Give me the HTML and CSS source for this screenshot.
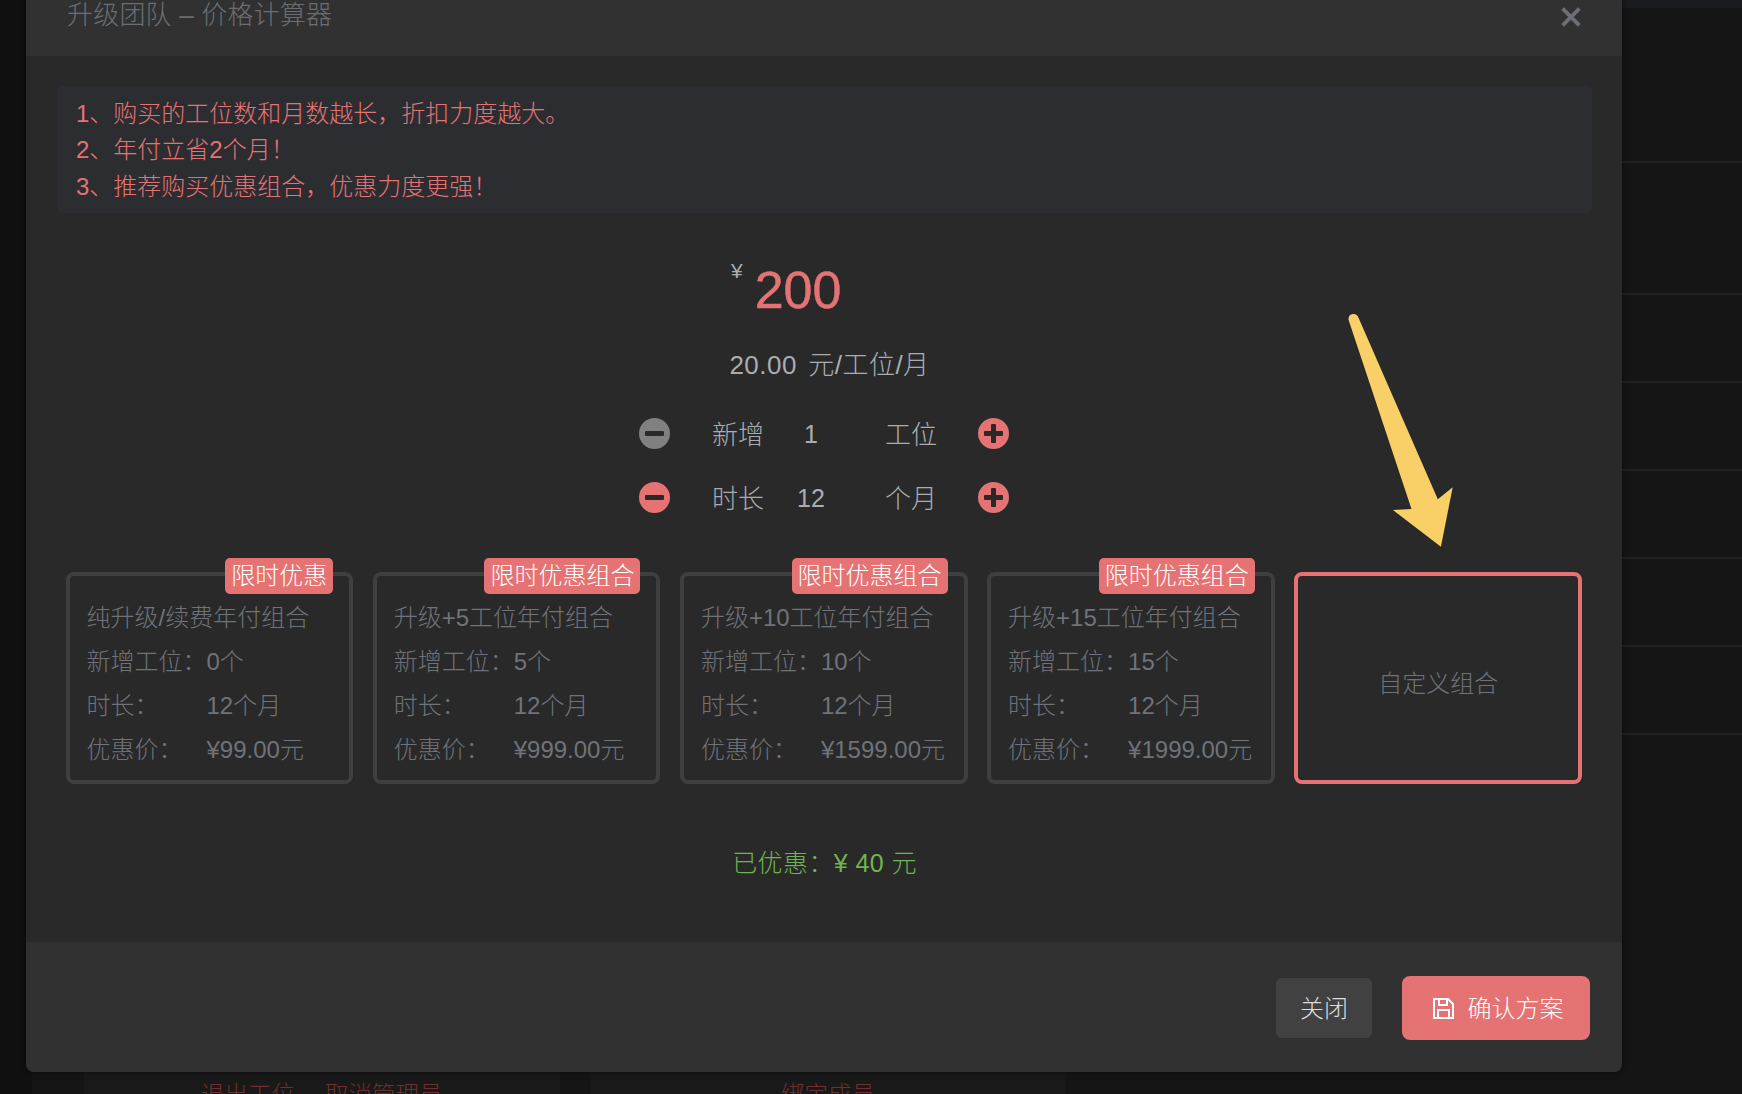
FILE: index.html
```html
<!DOCTYPE html>
<html lang="zh-CN">
<head>
    <meta charset="UTF-8">
    <meta name="viewport" content="width=device-width, initial-scale=1.0">
    <title>升级团队</title>
    <link rel="stylesheet" href="styles.css">
</head>
<body>
    <div class="page">
        <div class="back-table">
            <div class="back-row back-top"></div>
            <div class="back-row back-a"></div>
            <div class="back-row back-b"></div>
            <div class="back-row back-c"></div>
            <div class="back-row back-c"></div>
            <div class="back-row back-c"></div>
            <div class="back-row back-c"></div>
            <div class="back-row back-c"></div>
            <div class="back-actions">
                <div class="action-cell">
                    <span>退出工位</span>
                    <span>取消管理员</span>
                </div>
                <div class="action-cell action-right">
                    <span>绑定成员</span>
                </div>
            </div>
        </div>

        <div class="modal">
            <div class="modal-header">
                <span class="modal-title">升级团队 – 价格计算器</span>
                <svg class="close-icon" viewBox="0 0 18 18">
                    <path d="M1.5 1.5L16.5 16.5M16.5 1.5L1.5 16.5"></path>
                </svg>
            </div>

            <div class="modal-body">
                <div class="notice">
                    <div>1、购买的工位数和月数越长&#xFF0C;折扣力度越大。</div>
                    <div>2、年付立省2个月&#xFF01;</div>
                    <div>3、推荐购买优惠组合&#xFF0C;优惠力度更强&#xFF01;</div>
                </div>

                <div class="price">
                    <span class="price-sign">¥</span>
                    <span class="price-num">200</span>
                </div>
                <div class="unit-price">20.00 元/工位/月</div>

                <div class="stepper">
                    <span class="step-btn step-off"><i class="bar-h"></i></span>
                    <span class="step-label">新增</span>
                    <span class="step-value">1</span>
                    <span class="step-label">工位</span>
                    <span class="step-btn"><i class="bar-h"></i><i class="bar-v"></i></span>
                </div>
                <div class="stepper">
                    <span class="step-btn"><i class="bar-h"></i></span>
                    <span class="step-label">时长</span>
                    <span class="step-value">12</span>
                    <span class="step-label">个月</span>
                    <span class="step-btn"><i class="bar-h"></i><i class="bar-v"></i></span>
                </div>

                <div class="plans">
                    <div class="plan">
                        <span class="plan-badge">限时优惠</span>
                        <div class="plan-name">纯升级/续费年付组合</div>
                        <div class="plan-row"><span>新增工位&#xFF1A;</span><span>0个</span></div>
                        <div class="plan-row"><span>时长&#xFF1A;</span><span>12个月</span></div>
                        <div class="plan-row"><span>优惠价&#xFF1A;</span><span>¥99.00元</span></div>
                    </div>
                    <div class="plan">
                        <span class="plan-badge">限时优惠组合</span>
                        <div class="plan-name">升级+5工位年付组合</div>
                        <div class="plan-row"><span>新增工位&#xFF1A;</span><span>5个</span></div>
                        <div class="plan-row"><span>时长&#xFF1A;</span><span>12个月</span></div>
                        <div class="plan-row"><span>优惠价&#xFF1A;</span><span>¥999.00元</span></div>
                    </div>
                    <div class="plan">
                        <span class="plan-badge">限时优惠组合</span>
                        <div class="plan-name">升级+10工位年付组合</div>
                        <div class="plan-row"><span>新增工位&#xFF1A;</span><span>10个</span></div>
                        <div class="plan-row"><span>时长&#xFF1A;</span><span>12个月</span></div>
                        <div class="plan-row"><span>优惠价&#xFF1A;</span><span>¥1599.00元</span></div>
                    </div>
                    <div class="plan">
                        <span class="plan-badge">限时优惠组合</span>
                        <div class="plan-name">升级+15工位年付组合</div>
                        <div class="plan-row"><span>新增工位&#xFF1A;</span><span>15个</span></div>
                        <div class="plan-row"><span>时长&#xFF1A;</span><span>12个月</span></div>
                        <div class="plan-row"><span>优惠价&#xFF1A;</span><span>¥1999.00元</span></div>
                    </div>
                    <div class="plan plan-custom">自定义组合</div>
                </div>

                <div class="saved">已优惠&#xFF1A;¥ 40 元</div>
            </div>

            <div class="modal-footer">
                <button class="btn btn-close">关闭</button>
                <button class="btn btn-confirm">
                    <svg class="save-icon" viewBox="0 0 21 21">
                        <path d="M1 1H15L20 6V20H1Z"></path>
                        <path d="M6 1V7H14V1"></path>
                        <path d="M5 20V12H16V20"></path>
                    </svg>
                    确认方案
                </button>
            </div>

            <svg class="arrow" viewBox="0 0 120 250">
                <path d="M8.6 15C8 11 10 9 13.8 9C16 9 17.5 10.5 18.3 12.3L97.8 194.3L112.7 182.3L100.9 241.7L52.9 205L71.5 204Z"></path>
            </svg>
        </div>
    </div>
</body>
</html>
```

FILE: styles.css
```css
* {
    box-sizing: border-box;
}
html, body {
    margin: 0;
    height: 100%;
    overflow: hidden;
}
body {
    background: #101010;
    font-family: "Liberation Sans", "Noto Sans CJK SC", sans-serif;
    font-weight: 300;
}
.page {
    position: relative;
    height: 1094px;
    overflow: hidden;
}

/* table behind the dialog */
.back-table {
    margin-left: 32px;
    height: 1094px;
    background: #151515;
}
.back-row {
    border-bottom: 2px solid #212121;
}
.back-top {
    height: 8px;
    background: #1a1b1e;
    border-bottom: 0;
}
.back-a {
    height: 155px;
}
.back-b {
    height: 132px;
}
.back-c {
    height: 88px;
}
.back-actions {
    display: flex;
    gap: 30px;
    margin: 298px 0 0 52px;
    color: #6e3030;
    font-size: 23.5px;
    line-height: 24px;
}
.action-cell {
    width: 476px;
    display: flex;
    gap: 30px;
    padding: 50px 0 0 117px;
    background: #191919;
}
.action-right {
    padding-left: 191px;
}

/* dialog */
.modal {
    position: absolute;
    left: 26px;
    top: -20px;
    width: 1596px;
    height: 1092px;
    border-radius: 8px;
    background: #292929;
    display: flex;
    flex-direction: column;
    overflow: hidden;
    box-shadow: 0 0 6px rgba(0, 0, 0, 0.5);
}
.modal-header {
    height: 76px;
    flex: none;
    background: #313131;
    display: flex;
    justify-content: space-between;
    align-items: flex-start;
    padding: 16px 41px 0 41px;
}
.modal-title {
    color: #6a6e73;
    font-size: 26px;
    letter-spacing: 0.2px;
    line-height: 38px;
}
.close-icon {
    width: 20px;
    height: 20px;
    margin-top: 11px;
}
.close-icon path {
    fill: none;
    stroke: #6c7076;
    stroke-width: 3.4;
}
.modal-body {
    flex: 1;
    padding: 30px 30px 0 31px;
}
.notice {
    height: 127px;
    padding: 10px 19px;
    border-radius: 5px;
    background: #2c2d31;
    color: #e57373;
    font-size: 24px;
    line-height: 36.3px;
}
.price {
    display: flex;
    align-items: flex-start;
    height: 64px;
    margin: 46px 0 0 674px;
    gap: 12px;
}
.price-sign {
    color: #a9adb2;
    font-size: 21px;
    line-height: 24px;
}
.price-num {
    color: #e57373;
    font-size: 52px;
    line-height: 60px;
    font-weight: 400;
    margin-top: 1px;
    -webkit-text-stroke: 0.5px #e57373;
}
.unit-price {
    margin-top: 24px;
    padding-left: 10px;
    text-align: center;
    color: #a9adb2;
    font-size: 26px;
    letter-spacing: 0.5px;
    word-spacing: 3.5px;
    line-height: 36px;
}
.stepper {
    display: flex;
    align-items: center;
    height: 32px;
    margin: 0 0 0 582px;
}
.unit-price + .stepper {
    margin-top: 34px;
}
.stepper + .stepper {
    margin-top: 32px;
}
.step-btn {
    position: relative;
    width: 31px;
    height: 31px;
    flex: none;
    border-radius: 50%;
    background: #e57373;
}
.step-off {
    background: #808080;
}
.bar-h, .bar-v {
    position: absolute;
    background: #292929;
    border-radius: 1px;
}
.bar-h {
    left: 6px;
    right: 6px;
    top: 13px;
    height: 5px;
}
.bar-v {
    top: 6px;
    bottom: 6px;
    left: 13px;
    width: 5px;
}
.step-label {
    width: 52px;
    flex: none;
    padding-top: 3px;
    color: #a9adb2;
    font-size: 26px;
    line-height: 32px;
    white-space: nowrap;
}
.step-btn + .step-label {
    margin-left: 42px;
}
.step-value {
    width: 121px;
    flex: none;
    text-align: center;
    color: #a9adb2;
    font-size: 25px;
    line-height: 32px;
    padding: 1px 27px 0 0;
}
.step-label + .step-btn {
    margin-left: 41px;
}
.plans {
    display: grid;
    grid-template-columns: repeat(5, 1fr);
    gap: 19.5px;
    height: 212px;
    margin: 59px 10px 0 8.5px;
}
.plan {
    position: relative;
    height: 212px;
    padding: 20px 0 0 17px;
    border: 4px solid #3f3f3f;
    border-radius: 8px;
    color: #6f7379;
    font-size: 24px;
    line-height: 44px;
    white-space: nowrap;
}
.plan-badge {
    position: absolute;
    top: -18px;
    right: 16px;
    height: 36px;
    padding: 0 6px;
    border-radius: 5px;
    background: #e57373;
    color: #fff;
    font-size: 24px;
    line-height: 36px;
}
.plan-row {
    display: flex;
}
.plan-row span:first-child {
    width: 120px;
    flex: none;
}
.plan-custom {
    display: flex;
    align-items: center;
    justify-content: center;
    padding: 12px 0 0;
    border-color: #e57373;
}
.saved {
    margin-top: 59px;
    text-align: center;
    color: #6fb54d;
    font-size: 25px;
    letter-spacing: 0.4px;
    line-height: 40px;
}
.modal-footer {
    height: 130px;
    flex: none;
    background: #313131;
    display: flex;
    align-items: center;
    justify-content: flex-end;
    gap: 30px;
    padding: 2px 32px 0 0;
}
.btn {
    border: 0;
    font-family: inherit;
    font-weight: 300;
    font-size: 24px;
    color: #fff;
    padding-bottom: 4px;
}
.btn-close {
    width: 96px;
    height: 60px;
    border-radius: 6px;
    background: #414141;
    color: #ddd;
}
.btn-confirm {
    display: flex;
    align-items: center;
    justify-content: center;
    gap: 14px;
    width: 188px;
    height: 64px;
    padding-left: 10px;
    border-radius: 8px;
    background: #e57373;
}
.save-icon {
    width: 21px;
    height: 21px;
    margin-top: 4px;
}
.save-icon path {
    fill: none;
    stroke: #fff;
    stroke-width: 2;
}
.arrow {
    position: absolute;
    left: 1314px;
    top: 325px;
    width: 120px;
    height: 250px;
}
.arrow path {
    fill: #f9d068;
}
```
